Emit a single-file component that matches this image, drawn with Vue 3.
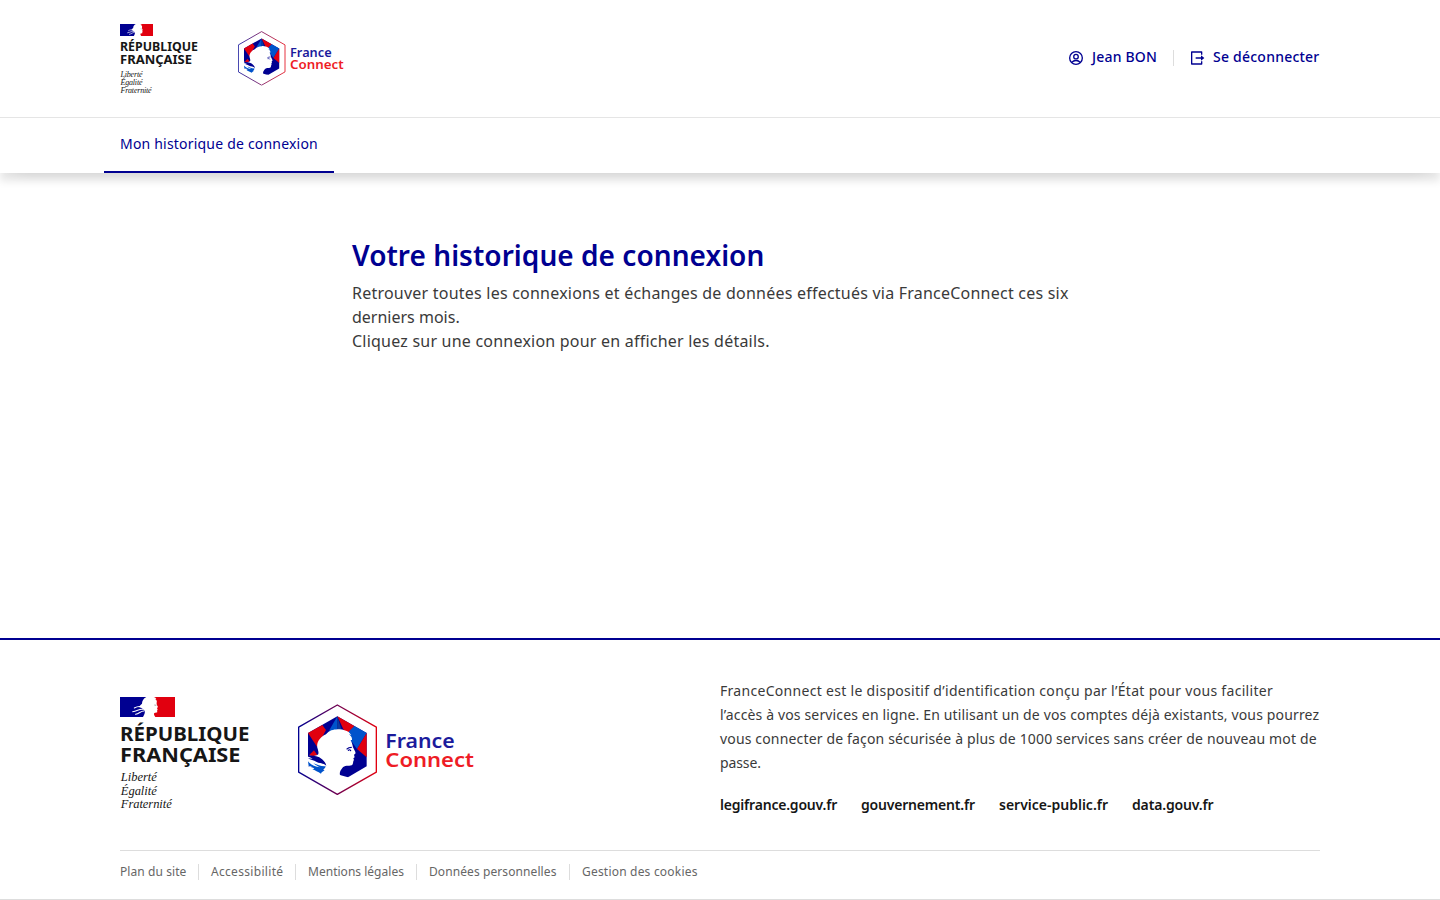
<script setup>
const intro = [
  { text: 'Retrouver toutes les connexions et échanges de données effectués via FranceConnect ces six', spacing: 0.225 },
  { text: 'derniers mois.', spacing: 0 },
  { text: 'Cliquez sur une connexion pour en afficher les détails.', spacing: 0.22 },
]
const about = [
  { text: 'FranceConnect est le dispositif d’identification conçu par l’État pour vous faciliter', spacing: 0.3 },
  { text: 'l’accès à vos services en ligne. En utilisant un de vos comptes déjà existants, vous pourrez', spacing: 0.145 },
  { text: 'vous connecter de façon sécurisée à plus de 1000 services sans créer de nouveau mot de', spacing: 0.157 },
  { text: 'passe.', spacing: -0.1 },
]
const sites = [
  { label: 'legifrance.gouv.fr', width: 117, spacing: -0.2 },
  { label: 'gouvernement.fr', width: 114, spacing: -0.2 },
  { label: 'service-public.fr', width: 109, spacing: 0 },
  { label: 'data.gouv.fr', width: 82, spacing: -0.15 },
]
const legal = [
  { label: 'Plan du site', width: 66, spacing: 0.08 },
  { label: 'Accessibilité', width: 72, spacing: 0.31 },
  { label: 'Mentions légales', width: 96, spacing: 0.02 },
  { label: 'Données personnelles', width: 128, spacing: 0.09 },
  { label: 'Gestion des cookies', width: 117, spacing: 0.2 },
]
</script>

<template>
  <div class="page">
    <svg class="defs" aria-hidden="true">
      <defs>
        <linearGradient id="hexStroke" x1="0" x2="1" y1="0" y2="0">
          <stop offset="0" stop-color="#000091" />
          <stop offset="1" stop-color="#e1000f" />
        </linearGradient>
        <symbol id="flag" viewBox="0 0 165 60">
          <path fill="#000091" d="M0 0H84V60H0Z" />
          <path fill="#e1000f" d="M90 0H165V60H90Z" />
          <path fill="#fff" d="M79 0C70 5 66 12 66 20C61 24 57 28 58 31C66 32 70 38 74 42C76 48 72 54 69 60H106C102 55 101 51 103 48C107 46 111 48 112 45L111 41L113 38L111 33L114 30C112 25 109 22 110 17C112 12 109 8 105 6L109 5C106 1 101 0 98 0Z" />
          <path fill="none" stroke="#fff" stroke-width="3.200" stroke-linecap="round" d="M67 30C58 27 50 29 43 33M69 37C60 34 52 42 38 44M71 42C63 42 58 49 47 52" />
          <path fill="none" stroke="#777" stroke-width="2" d="M103 24l6 1" />
        </symbol>
        <symbol id="emblem" viewBox="0 0 240 274">
          <path fill="#fff" stroke="url(#hexStroke)" stroke-width="4" stroke-linejoin="round" d="M118 3L235 69.500V204.500L118 271L2 204.500V69.500Z" />
          <path fill="#000091" d="M118 37L206 87V187L150 220L95 205L30 187V87Z" />
          <path fill="#e1000f" d="M30 87L73 63L84 78L57 128L30 87Z" />
          <path fill="#e1000f" d="M30 157L48 139L58 153L40 157Z" />
          <path fill="#0053cb" d="M118 37L93 80L118 84Z" />
          <path fill="#0b3a9e" d="M118 37V84L132 82Z" />
          <path fill="#e1000f" d="M118 37L169 66L153 84H140Z" />
          <path fill="#0053cb" d="M169 66L206 87L177 135L156 106L152 83Z" />
          <path fill="#e1000f" d="M206 87V160L177 135Z" />
          <path fill="#fff" d="M84 91C94 79 106 77 119 76C132 74 143 79 152 84L160 93L152 91C159 96 163 100 162 108H158C162 116 164 124 165 130L171 142C174 147 172 151 168 152L170 160L166 163L168 168C164 172 167 180 161 184C152 187 139 183 133 192C127 200 124 205 126 214C134 223 146 221 153 218L118 240L79 218L66 203C72 204 78 196 79 189C73 191 66 191 61 194L29 187V153L45 157L58 153C64 151 61 140 58 131C54 114 70 96 84 91Z" />
          <path fill="#0053cb" d="M30 172L32 186C40 187 45 190 49 194L43 196C51 199 60 204 69 209C70 204 76 203 80 199L73 197C80 195 82 191 83 187C69 188 58 182 46 178C55 185 60 188 67 190C52 189 40 184 30 172Z" />
          <path fill="#000091" d="M30 152C42 157 58 153 68 163C77 170 82 174 85 185C75 176 65 179 56 174C47 169 37 167 30 163L44 164C39 160 35 159 30 158Z" />
          <path fill="none" stroke="#000091" stroke-width="3.500" stroke-linecap="round" d="M147 135C151 131 155 130 160 130M151 139C154 136 156 137 158 140" />
        </symbol>
      </defs>
    </svg>

    <header class="header">
      <div class="top">
        <svg class="rf-small" width="90" height="72" viewBox="0 0 90 72">
          <use href="#flag" width="33" height="12" />
          <g class="rf-name" font-size="12.300">
            <text x="0" y="27" textLength="78" lengthAdjust="spacingAndGlyphs">RÉPUBLIQUE</text>
            <text x="0" y="40" textLength="72" lengthAdjust="spacingAndGlyphs">FRANÇAISE</text>
          </g>
          <g class="motto" font-size="8">
            <text x="0.500" y="52.500" textLength="22">Liberté</text>
            <text x="0.500" y="61" textLength="22">Égalité</text>
            <text x="0.500" y="69.300" textLength="31">Fraternité</text>
          </g>
        </svg>
        <svg class="fc-small" width="108" height="55" viewBox="0 0 540 275">
          <use href="#emblem" width="240" height="274" />
          <g class="fc-name" font-size="61">
            <text class="france" x="260" y="132" textLength="208" lengthAdjust="spacingAndGlyphs">France</text>
            <text class="connect" x="260" y="190" textLength="268" lengthAdjust="spacingAndGlyphs">Connect</text>
          </g>
        </svg>
        <div class="tools">
          <a class="tool user">
            <svg width="16" height="16" viewBox="0 0 24 24" fill="none" stroke="currentColor" stroke-width="2">
              <circle cx="12" cy="12" r="9.500" />
              <circle cx="12" cy="10" r="3.400" />
              <path d="M5.800 18.500C8.500 14.900 15.500 14.900 18.200 18.500" />
            </svg>
            <span>Jean BON</span>
          </a>
          <a class="tool logout">
            <svg width="16" height="16" viewBox="0 0 24 24" fill="currentColor">
              <path d="M4 22a1 1 0 0 1-1-1V3a1 1 0 0 1 1-1h15a1 1 0 0 1 1 1v4h-2V4H5v16h13v-3h2v4a1 1 0 0 1-1 1H4zm14-6v-3h-8v-2h8V8l5 4-5 4z" />
            </svg>
            <span>Se déconnecter</span>
          </a>
        </div>
      </div>
      <nav class="nav">
        <a class="tab">Mon historique de connexion</a>
      </nav>
    </header>

    <main class="main">
      <h1>Votre historique de connexion</h1>
      <p><span v-for="line in intro" :key="line.text" class="line" :style="{ letterSpacing: line.spacing + 'px' }">{{ line.text }}</span></p>
    </main>

    <footer class="footer">
      <div class="body">
        <div class="brands">
          <svg class="rf-large" width="140" height="120" viewBox="0 0 140 120">
            <use href="#flag" width="55" height="20" />
            <g class="rf-name" font-size="19.600">
              <text x="0" y="44" textLength="129.500" lengthAdjust="spacingAndGlyphs">RÉPUBLIQUE</text>
              <text x="0" y="65" textLength="120.500" lengthAdjust="spacingAndGlyphs">FRANÇAISE</text>
            </g>
            <g class="motto" font-size="12.500">
              <text x="0.800" y="84" textLength="36">Liberté</text>
              <text x="0.800" y="97.500" textLength="36">Égalité</text>
              <text x="0.800" y="111" textLength="51">Fraternité</text>
            </g>
          </svg>
          <svg class="fc-large" width="180" height="91" viewBox="0 0 540 273">
            <use href="#emblem" width="240" height="274" />
            <g class="fc-name" font-size="61">
              <text class="france" x="262" y="131" textLength="208" lengthAdjust="spacingAndGlyphs">France</text>
              <text class="connect" x="262" y="188" textLength="266" lengthAdjust="spacingAndGlyphs">Connect</text>
            </g>
          </svg>
        </div>
        <div class="content">
          <p><span v-for="line in about" :key="line.text" class="line" :style="{ letterSpacing: line.spacing + 'px' }">{{ line.text }}</span></p>
          <ul class="sites">
            <li v-for="s in sites" :key="s.label" :style="{ width: s.width + 'px', letterSpacing: s.spacing + 'px' }">{{ s.label }}</li>
          </ul>
        </div>
      </div>
      <ul class="legal">
        <li v-for="l in legal" :key="l.label"><span :style="{ width: l.width + 'px', letterSpacing: l.spacing + 'px' }">{{ l.label }}</span></li>
      </ul>
    </footer>
  </div>
</template>

<style>
body { margin: 0; background: #fff; }
</style>

<style scoped>
.page { display: flex; flex-direction: column; height: 900px; overflow: hidden; background: #fff; color: #3a3a3a; font-family: "Noto Sans", "Open Sans", sans-serif; }
.defs { position: absolute; width: 0; height: 0; }
svg { display: block; flex: none; }
p, h1, ul { margin: 0; padding: 0; list-style: none; }
.line { display: block; white-space: nowrap; }

.header { height: 173px; flex: none; background: #fff; box-shadow: 0 8px 8px 0 rgba(0, 0, 0, .1), 0 8px 16px -16px rgba(0, 0, 0, .32); }
.top { display: flex; align-items: flex-start; height: 117px; padding: 0 120px; border-bottom: 1px solid #e5e5e5; }
.rf-small { margin-top: 24px; }
.fc-small { margin: 31px 0 0 28px; }
.rf-name { font-weight: 700; fill: #161616; }
.motto { font-family: "Liberation Serif", serif; font-style: italic; fill: #161616; }
.fc-name { font-weight: 600; }
.france { fill: #1b1b9c; }
.connect { fill: #ee1c25; }
.tools { display: flex; align-items: center; margin: 45px 0 0 auto; color: #000091; font-size: 14px; line-height: 24px; font-weight: 500; white-space: nowrap; }
.tool { display: flex; align-items: center; gap: 8px; }
.tool svg { margin-top: 1px; }
.user span { width: 65px; letter-spacing: .19px; }
.logout span { width: 107px; letter-spacing: .23px; }
.logout { position: relative; margin-left: 32px; }
.logout::before { content: ""; position: absolute; left: -16px; top: 5px; width: 1px; height: 16px; background: #ddd; }
.nav { display: flex; height: 55px; padding: 0 104px; }
.tab { width: 198px; padding: 14px 16px 0; border-bottom: 2px solid #000091; color: #000091; font-size: 14px; line-height: 24px; letter-spacing: .2px; white-space: nowrap; }

.main { flex: 1; width: 736px; margin: 0 auto; padding-top: 64px; }
h1 { color: #000091; font-size: 28px; line-height: 36px; font-weight: 600; letter-spacing: .04px; white-space: nowrap; }
.main p { margin-top: 8px; font-size: 16px; line-height: 24px; }

.footer { flex: none; height: 262px; border-top: 2px solid #000091; border-bottom: 1px solid #ddd; padding: 0 120px; box-sizing: border-box; }
.body { display: grid; grid-template-columns: 600px 600px; height: 210px; }
.brands { display: flex; align-items: flex-start; }
.rf-large { margin-top: 57px; }
.fc-large { margin: 64px 0 0 38px; }
.content { padding-top: 39px; font-size: 14px; line-height: 24px; }
.sites { display: flex; gap: 24px; margin-top: 18px; color: #161616; font-weight: 600; white-space: nowrap; }
.legal { display: flex; padding-top: 13px; border-top: 1px solid #ddd; color: #666; font-size: 12px; line-height: 16px; white-space: nowrap; }
.legal li { display: flex; height: 16px; }
.legal li + li { margin-left: 12px; padding-left: 12px; border-left: 1px solid #ddd; }
</style>
